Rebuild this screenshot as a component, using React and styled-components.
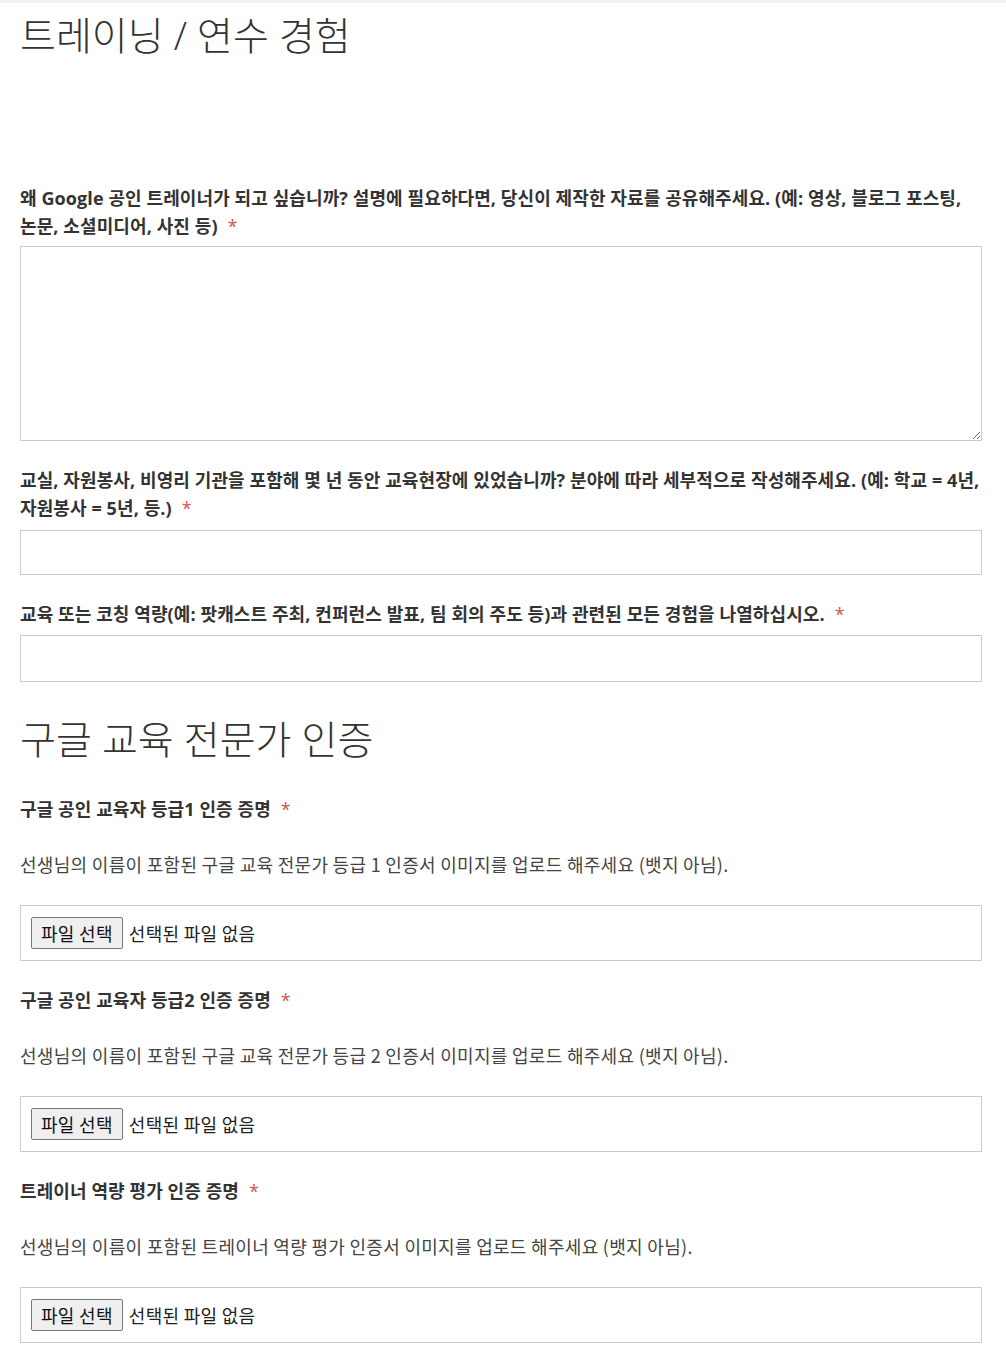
import React from "react";
import styled, { createGlobalStyle } from "styled-components";

const Global = createGlobalStyle`
  html, body { margin: 0; padding: 0; background: #fff; }
  body {
    font-family: "Open Sans", "Noto Sans CJK KR", sans-serif;
    color: #333;
  }
`;

const Page = styled.div`
  border-top: 3px solid #f2f2f2;
  padding: 8px 24px 40px 20px;
`;

const SectionTitle = styled.h2`
  margin: 0;
  font-family: "Open Sans", "Noto Sans CJK KR", sans-serif;
  font-weight: 300;
  font-size: 39px;
  line-height: 48px;
  color: #333;
  margin-bottom: ${(p) => p.$after ?? 32}px;
`;

const Field = styled.div`
  display: flex;
  flex-direction: column;
  margin-bottom: ${(p) => p.$after ?? 25}px;
`;

const Label = styled.label`
  font-weight: 700;
  font-size: 18px;
  letter-spacing: 0.1px;
  line-height: 28px;
  color: #333;
  margin-bottom: ${(p) => p.$gap ?? 7}px;
`;

const Required = styled.span`
  color: #d9534f;
  font-weight: 400;
  margin-left: 10px;
`;

const Description = styled.p`
  margin: 0 0 27px;
  padding-top: 27px;
  font-size: 18px;
  letter-spacing: 0.3px;
  line-height: 28px;
  color: #444;
  font-family: "Noto Sans CJK KR", "Open Sans", sans-serif;
  font-weight: 400;
`;

const TextArea = styled.textarea`
  box-sizing: border-box;
  width: 100%;
  height: 195px;
  border: 1px solid #ccc;
  border-radius: 0;
  background: #fff;
  margin: 0;
  padding: 8px;
  font: inherit;
  display: block;
`;

const TextInput = styled.input`
  box-sizing: border-box;
  width: 100%;
  height: ${(p) => p.$h ?? 45}px;
  border: 1px solid #ccc;
  border-radius: 0;
  background: #fff;
  margin: 0;
  padding: 0 10px;
  font: inherit;
  display: block;
`;

const FileBox = styled.div`
  box-sizing: border-box;
  display: flex;
  align-items: center;
  gap: 6px;
  height: 56px;
  border: 1px solid #ccc;
  padding: 0 10px;
  background: #fff;
`;

const FileButton = styled.button`
  box-sizing: border-box;
  height: 32px;
  padding: 0 9px;
  border: 1px solid #767676;
  border-radius: 2px;
  background: #efefef;
  color: #111;
  font-family: "Noto Sans CJK KR", sans-serif;
  font-size: 18px;
  letter-spacing: 0.3px;
  line-height: 30px;
  cursor: pointer;
`;

const FileStatus = styled.span`
  font-family: "Noto Sans CJK KR", sans-serif;
  font-size: 18px;
  letter-spacing: 0.3px;
  color: #222;
`;

function FileField({ title, text }) {
  return (
    <Field $after={25}>
      <Label $gap={0}>
        {title}
        <Required>*</Required>
      </Label>
      <Description>{text}</Description>
      <FileBox>
        <FileButton type="button">파일 선택</FileButton>
        <FileStatus>선택된 파일 없음</FileStatus>
      </FileBox>
    </Field>
  );
}

export default function App() {
  return (
    <>
      <Global />
      <Page>
        <SectionTitle $after={125}>트레이닝 / 연수 경험</SectionTitle>

        <Field>
          <Label $gap={6}>
            왜 Google 공인 트레이너가 되고 싶습니까? 설명에 필요하다면, 당신이 제작한 자료를 공유해주세요. (예: 영상, 블로그 포스팅, 논문, 소셜미디어, 사진 등)
            <Required>*</Required>
          </Label>
          <TextArea />
        </Field>

        <Field>
          <Label $gap={8}>
            교실, 자원봉사, 비영리 기관을 포함해 몇 년 동안 교육현장에 있었습니까? 분야에 따라 세부적으로 작성해주세요. (예: 학교 = 4년, 자원봉사 = 5년, 등.)
            <Required>*</Required>
          </Label>
          <TextInput type="text" $h={45} />
        </Field>

        <Field $after={33}>
          <Label $gap={7}>
            교육 또는 코칭 역량(예: 팟캐스트 주최, 컨퍼런스 발표, 팀 회의 주도 등)과 관련된 모든 경험을 나열하십시오.
            <Required>*</Required>
          </Label>
          <TextInput type="text" $h={47} />
        </Field>

        <SectionTitle>구글 교육 전문가 인증</SectionTitle>

        <FileField
          title="구글 공인 교육자 등급1 인증 증명"
          text="선생님의 이름이 포함된 구글 교육 전문가 등급 1 인증서 이미지를 업로드 해주세요 (뱃지 아님)."
        />
        <FileField
          title="구글 공인 교육자 등급2 인증 증명"
          text="선생님의 이름이 포함된 구글 교육 전문가 등급 2 인증서 이미지를 업로드 해주세요 (뱃지 아님)."
        />
        <FileField
          title="트레이너 역량 평가 인증 증명"
          text="선생님의 이름이 포함된 트레이너 역량 평가 인증서 이미지를 업로드 해주세요 (뱃지 아님)."
        />
      </Page>
    </>
  );
}
